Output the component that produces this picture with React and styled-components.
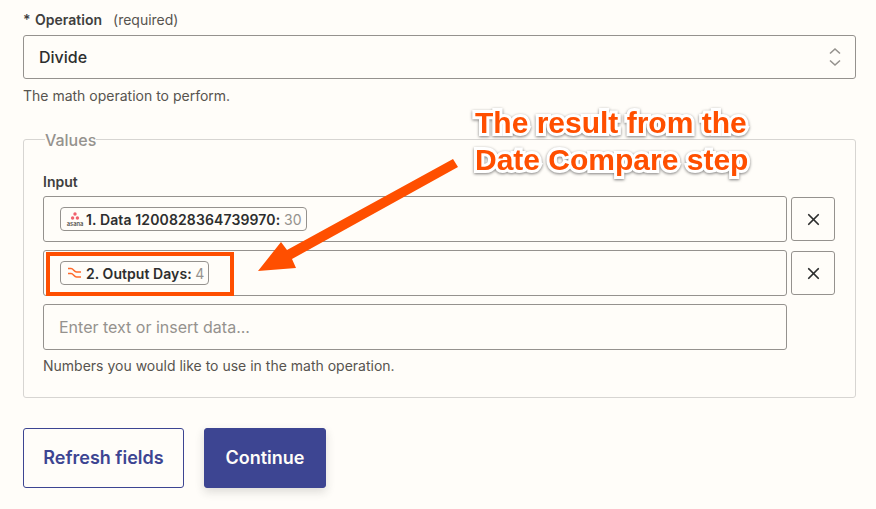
import React from 'react';
import styled, { createGlobalStyle } from 'styled-components';
import { X } from 'lucide-react';

const GlobalStyle = createGlobalStyle`
	html, body {
		margin: 0;
		padding: 0;
		background: #fffdf9;
	}
	body {
		font-family: Inter, "Liberation Sans", sans-serif;
		color: #2d2e2e;
	}
`;

const Page = styled.div`
	position: relative;
	width: 876px;
	height: 509px;
	overflow: hidden;
	box-sizing: border-box;
	padding: 12px 20px 0 23px;
`;

const FieldLabel = styled.div`
	height: 16px;
	font-size: 14px;
	line-height: 16px;
	font-weight: 600;
	color: #403f3e;
	white-space: pre;
`;

const Asterisk = styled.span`
	margin-right: 1px;
`;

const Required = styled.span`
	font-weight: 400;
	color: #57544f;
	margin-left: 11px;
`;

const SelectBox = styled.div`
	margin-top: 7px;
	height: 44px;
	box-sizing: border-box;
	border: 1px solid #95928e;
	border-radius: 3px;
	display: flex;
	align-items: center;
	justify-content: space-between;
	padding: 0 13px 0 15px;
	font-size: 16px;
	font-weight: 500;
	color: #2d2e2e;
`;

const HelpText = styled.p`
	margin: ${(props) => props.$top}px 0 0;
	font-size: 14px;
	line-height: 16px;
	color: #57544f;
`;

const ValuesSet = styled.fieldset`
	margin: 24px 0 0;
	padding: 24px 19px 0;
	height: 270px;
	box-sizing: border-box;
	border: 1px solid #d7d5d2;
	border-radius: 3px;
	min-width: 0;
`;

const ValuesLegend = styled.legend`
	margin-left: 2px;
	padding: 3px 0 1px;
	font-size: 16px;
	line-height: 18px;
	font-weight: 500;
	color: #95928e;
`;

const InputLabel = styled.div`
	font-size: 14px;
	line-height: 16px;
	font-weight: 600;
	color: #403f3e;
	margin-bottom: 6px;
`;

const InputRows = styled.div`
	display: flex;
	flex-direction: column;
	gap: 8px;
`;

const InputRow = styled.div`
	display: flex;
	align-items: center;
	gap: 4px;
`;

const InputBox = styled.div`
	width: 744px;
	height: 46px;
	box-sizing: border-box;
	border: 1px solid #95928e;
	border-radius: 3px;
	display: flex;
	align-items: center;
	padding: 0 16px;
`;

const Placeholder = styled.span`
	font-size: 16px;
	color: #95928e;
	margin-left: -1px;
`;

const Pill = styled.span`
	height: 24px;
	box-sizing: border-box;
	border: 1px solid #95928e;
	border-radius: 4px;
	display: inline-flex;
	align-items: center;
	gap: 2px;
	padding: 0 4px 0 5px;
	font-size: 14px;
	font-weight: 600;
	letter-spacing: ${(props) => props.$tracking}px;
	color: #2d2e2e;
	white-space: nowrap;
`;

const PillValue = styled.span`
	font-weight: 400;
	color: #95928e;
`;

const RemoveButton = styled.button`
	width: 44px;
	height: 44px;
	box-sizing: border-box;
	padding: 0;
	background: transparent;
	border: 1px solid #95928e;
	border-radius: 3px;
	display: flex;
	align-items: center;
	justify-content: center;
	color: #2d2e2e;
`;

const ButtonRow = styled.div`
	display: flex;
	gap: 20px;
	margin-top: 30px;
`;

const ActionButton = styled.button`
	height: 60px;
	width: ${(props) => props.$width}px;
	box-sizing: border-box;
	padding: 0 0 2px;
	border: 1px solid #3d4592;
	border-radius: 3px;
	font-family: inherit;
	font-size: 18px;
	font-weight: 600;
	color: ${(props) => (props.$primary ? '#fffdf9' : '#3d4592')};
	background: ${(props) => (props.$primary ? '#3d4592' : 'transparent')};
	box-shadow: ${(props) => (props.$primary ? '0 4px 10px rgba(45, 46, 46, 0.16)' : 'none')};
`;

const HighlightBox = styled.div`
	position: absolute;
	left: 46px;
	top: 252px;
	width: 188px;
	height: 44px;
	box-sizing: border-box;
	border: 4px solid #ff4f00;
`;

const ArrowSvg = styled.svg`
	position: absolute;
	left: 0;
	top: 0;
`;

const Callout = styled.div`
	position: absolute;
	left: 475px;
	top: 104px;
	font-family: "Liberation Sans", Arial, sans-serif;
	font-size: 30px;
	line-height: 37px;
	font-weight: 700;
	color: #ff4f00;
	white-space: pre;
	-webkit-text-stroke: 6px #fff;
	paint-order: stroke fill;
	filter: drop-shadow(0 1px 1.5px rgba(0, 0, 0, 0.5));
`;

function SelectArrows() {
	return (
		<svg width="14" height="20" viewBox="0 0 14 20" fill="none" stroke="#95928e" strokeWidth="1.6">
			<path d="M2 6.5l5-4.5 5 4.5M2 13.5l5 4.5 5-4.5" />
		</svg>
	);
}

function AsanaIcon() {
	return (
		<svg width="18" height="16" viewBox="0 0 18 16">
			<circle cx="9" cy="3" r="1.7" fill="#f0616d" />
			<circle cx="6.6" cy="7" r="1.7" fill="#f0616d" />
			<circle cx="11.4" cy="7" r="1.7" fill="#f0616d" />
			<text x="9" y="14.5" fontSize="5.8" textAnchor="middle" letterSpacing="0" fill="#57544f" fontFamily="Inter, sans-serif">asana</text>
		</svg>
	);
}

function CompareIcon() {
	return (
		<svg width="18" height="14" viewBox="0 0 18 14" fill="none" stroke="#ff6a2b" strokeWidth="1.5">
			<path d="M2 2.5h3c2.5 0 3 3.5 5.5 3.5H15M2 7.5h3c2.5 0 3 3.5 5.5 3.5H15" />
		</svg>
	);
}

export default function App() {
	return (
		<Page>
			<GlobalStyle />
			<FieldLabel>
				<Asterisk>*</Asterisk> Operation<Required>(required)</Required>
			</FieldLabel>
			<SelectBox>
				Divide
				<SelectArrows />
			</SelectBox>
			<HelpText $top={9}>The math operation to perform.</HelpText>
			<ValuesSet>
				<ValuesLegend>Values</ValuesLegend>
				<InputLabel>Input</InputLabel>
				<InputRows>
					<InputRow>
						<InputBox>
							<Pill $tracking={0.12}>
								<AsanaIcon />
								<span>
									1. Data 1200828364739970: <PillValue>30</PillValue>
								</span>
							</Pill>
						</InputBox>
						<RemoveButton>
							<X size={19} strokeWidth={2.2} />
						</RemoveButton>
					</InputRow>
					<InputRow>
						<InputBox>
							<Pill $tracking={0.06}>
								<CompareIcon />
								<span>
									2. Output Days: <PillValue>4</PillValue>
								</span>
							</Pill>
						</InputBox>
						<RemoveButton>
							<X size={19} strokeWidth={2.2} />
						</RemoveButton>
					</InputRow>
					<InputRow>
						<InputBox>
							<Placeholder>Enter text or insert data...</Placeholder>
						</InputBox>
					</InputRow>
				</InputRows>
				<HelpText $top={8}>Numbers you would like to use in the math operation.</HelpText>
			</ValuesSet>
			<ButtonRow>
				<ActionButton $width={161}>Refresh fields</ActionButton>
				<ActionButton $width={122} $primary>Continue</ActionButton>
			</ButtonRow>
			<HighlightBox />
			<ArrowSvg width="876" height="509">
				<polygon points="453,159 458,167 292,259 296,268 258,271 281,242 287,250" fill="#ff4f00" />
			</ArrowSvg>
			<Callout>{'The result from the\nDate Compare step'}</Callout>
		</Page>
	);
}
